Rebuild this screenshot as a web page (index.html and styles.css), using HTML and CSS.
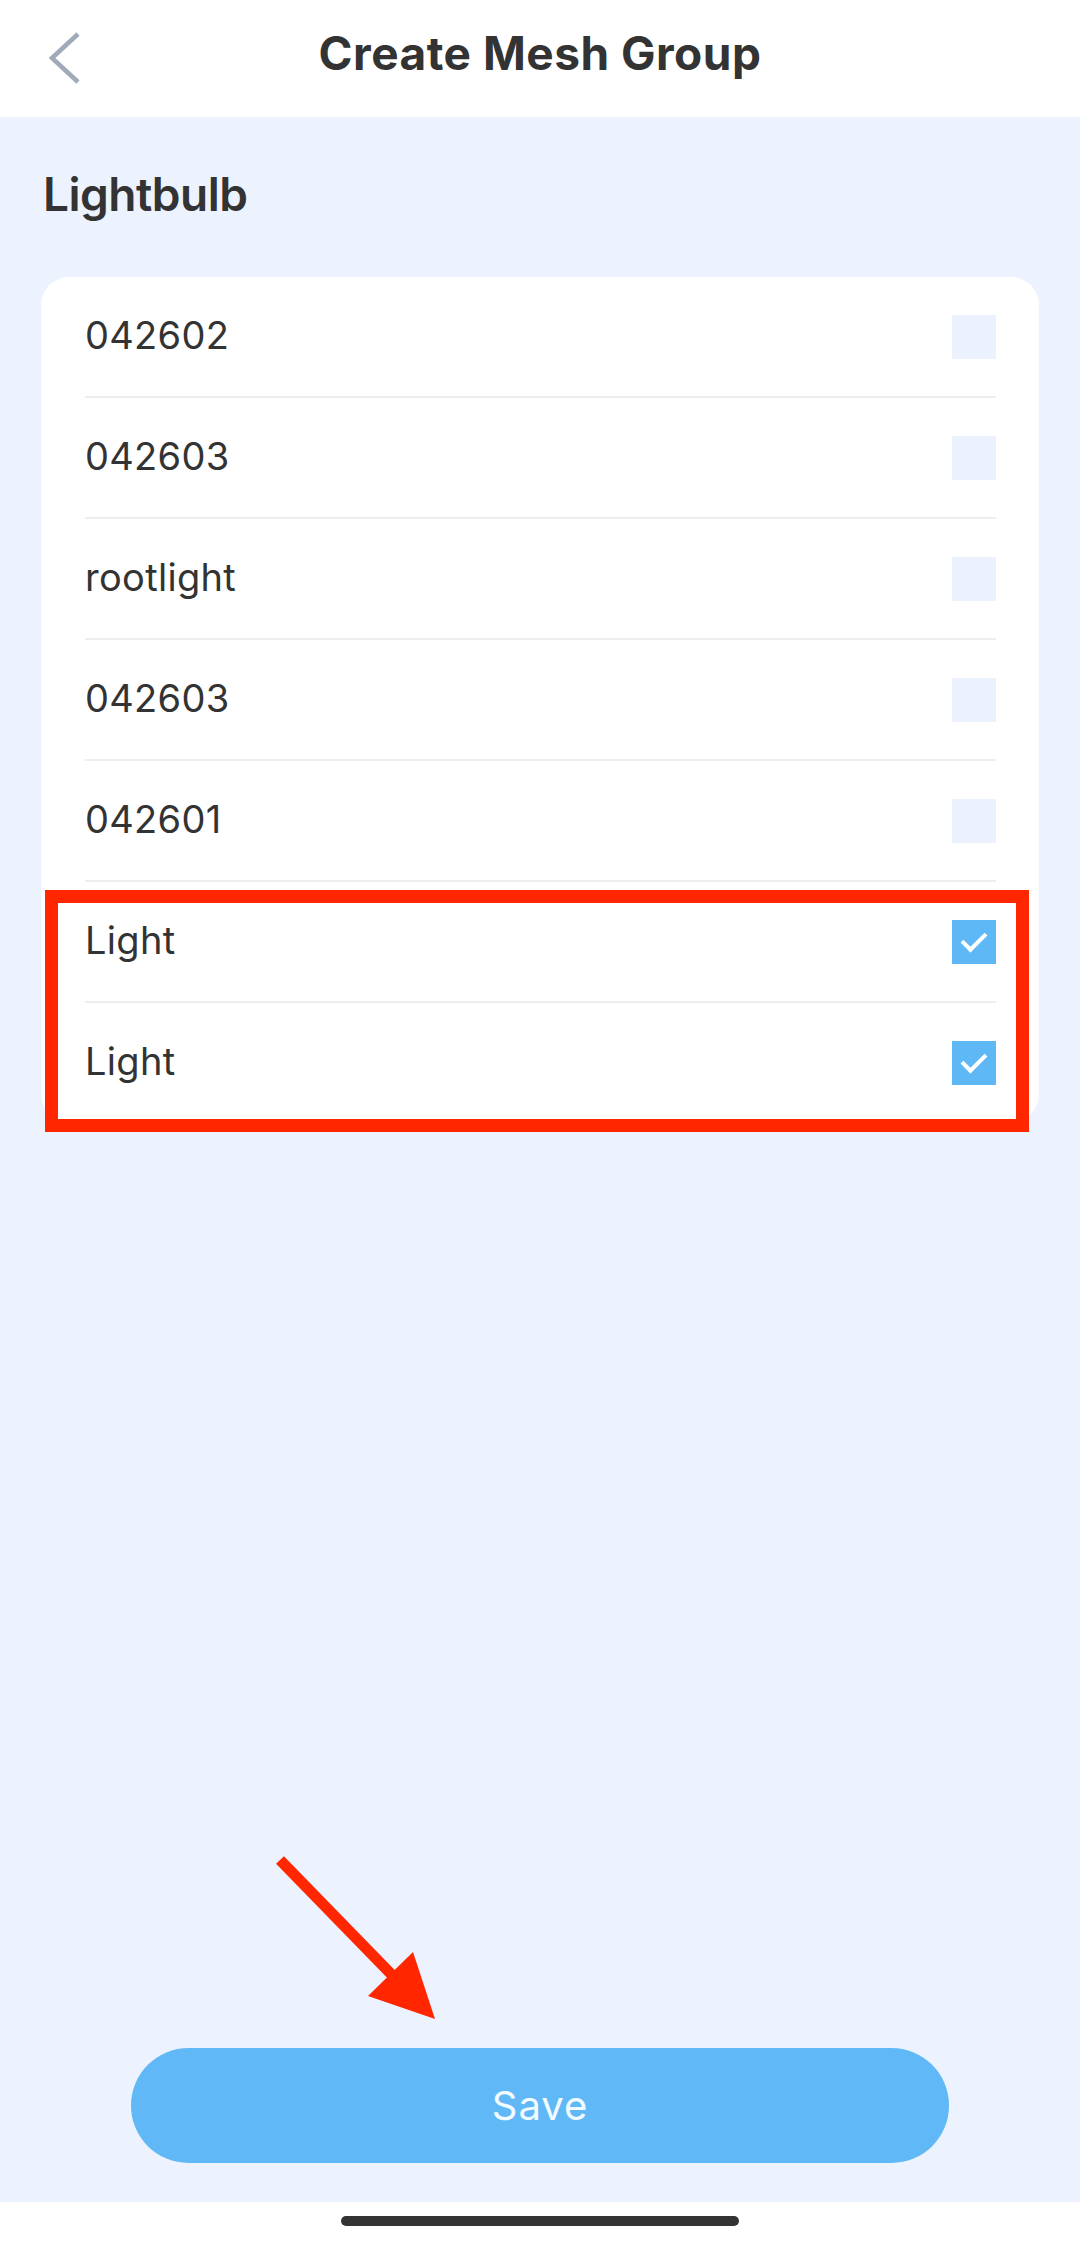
FILE: index.html
```html
<!DOCTYPE html>
<html lang="en">
<head>
    <meta charset="UTF-8">
    <meta name="viewport" content="width=device-width, initial-scale=1.0">
    <title>Create Mesh Group</title>
    <link rel="stylesheet" href="styles.css">
</head>
<body>

<div class="screen">
    <div class="header">
        <a href="#" class="back">
            <svg width="40" height="60" viewBox="0 0 40 60">
                <polyline points="34,8 8,32 34,56" fill="none" stroke="#a0aab8" stroke-width="4.5"/>
            </svg>
        </a>
        <h1>Create Mesh Group</h1>
    </div>

    <div class="content">
        <h2>Lightbulb</h2>
        <div class="device-list">
            <label class="device"><span>042602</span><input type="checkbox"><i class="box"></i></label>
            <label class="device"><span>042603</span><input type="checkbox"><i class="box"></i></label>
            <label class="device"><span>rootlight</span><input type="checkbox"><i class="box"></i></label>
            <label class="device"><span>042603</span><input type="checkbox"><i class="box"></i></label>
            <label class="device"><span>042601</span><input type="checkbox"><i class="box"></i></label>
            <label class="device"><span>Light</span><input type="checkbox" checked><i class="box"></i></label>
            <label class="device"><span>Light</span><input type="checkbox" checked><i class="box"></i></label>
        </div>
    </div>

    <div class="footer">
        <button class="btn">Save</button>
    </div>

    <div class="home-bar"><span></span></div>

    <!-- annotation overlays -->
    <div class="highlight"></div>
    <svg class="arrow" width="1080" height="2242" viewBox="0 0 1080 2242">
        <line x1="280" y1="1860" x2="392" y2="1975" stroke="#ff2600" stroke-width="11"/>
        <polygon points="368,1996 413,1952 435,2019" fill="#ff2600"/>
    </svg>
</div>

</body>
</html>
```

FILE: styles.css
```css
body {
    margin: 0;
    font-family: Inter, "Noto Sans", sans-serif;
    color: #333;
    background-color: #ecf2fe;
}
.screen {
    position: relative;
    width: 1080px;
    height: 2242px;
    display: flex;
    flex-direction: column;
    overflow: hidden;
}
.header {
    position: relative;
    height: 117px;
    box-sizing: border-box;
    padding-bottom: 12px;
    background-color: #fff;
    display: flex;
    justify-content: center;
    align-items: center;
}
.header h1 {
    margin: 0;
    font-size: 46px;
    font-weight: 700;
    letter-spacing: 0.5px;
    color: #333;
}
.back {
    position: absolute;
    left: 44px;
    top: 26px;
}
.content {
    padding: 0 41px;
}
.content h2 {
    margin: 0;
    padding: 54px 2px 0;
    height: 160px;
    box-sizing: border-box;
    font-size: 46px;
    line-height: 46px;
    font-weight: 600;
    letter-spacing: -0.5px;
}
.device-list {
    background-color: #fff;
    border-radius: 28px;
    padding: 0 43px 0 44px;
}
.device {
    height: 119px;
    display: flex;
    align-items: center;
    justify-content: space-between;
    border-bottom: 2px solid #eeeeee;
    font-size: 38px;
    letter-spacing: 0.3px;
}
.device span {
    padding-bottom: 4px;
}
.device:last-child {
    border-bottom: none;
}
.device input {
    display: none;
}
.box {
    width: 44px;
    height: 44px;
    background-color: #ebf2fe;
    display: flex;
    align-items: center;
    justify-content: center;
}
.device input:checked + .box {
    background-color: #5fb8f6;
}
.device input:checked + .box::after {
    content: "";
    width: 20px;
    height: 10px;
    border-left: 4px solid #fff;
    border-bottom: 4px solid #fff;
    transform: translateY(-3px) rotate(-45deg);
}
.footer {
    flex: 1;
    display: flex;
    align-items: flex-end;
    justify-content: center;
    padding-bottom: 39px;
}
.btn {
    width: 818px;
    height: 115px;
    border: none;
    border-radius: 58px;
    background-color: #60b8f6;
    color: #f2fbff;
    font-family: Inter, "Noto Sans", sans-serif;
    font-size: 40px;
    letter-spacing: 1px;
    cursor: pointer;
}
.home-bar {
    height: 40px;
    background-color: #fff;
    display: flex;
    justify-content: center;
    padding-top: 14px;
    box-sizing: border-box;
}
.home-bar span {
    width: 398px;
    height: 10px;
    border-radius: 5px;
    background-color: #333;
}
.highlight {
    position: absolute;
    left: 45px;
    top: 890px;
    width: 984px;
    height: 242px;
    box-sizing: border-box;
    border: 13px solid #ff2600;
}
.arrow {
    position: absolute;
    left: 0;
    top: 0;
    pointer-events: none;
}
```
